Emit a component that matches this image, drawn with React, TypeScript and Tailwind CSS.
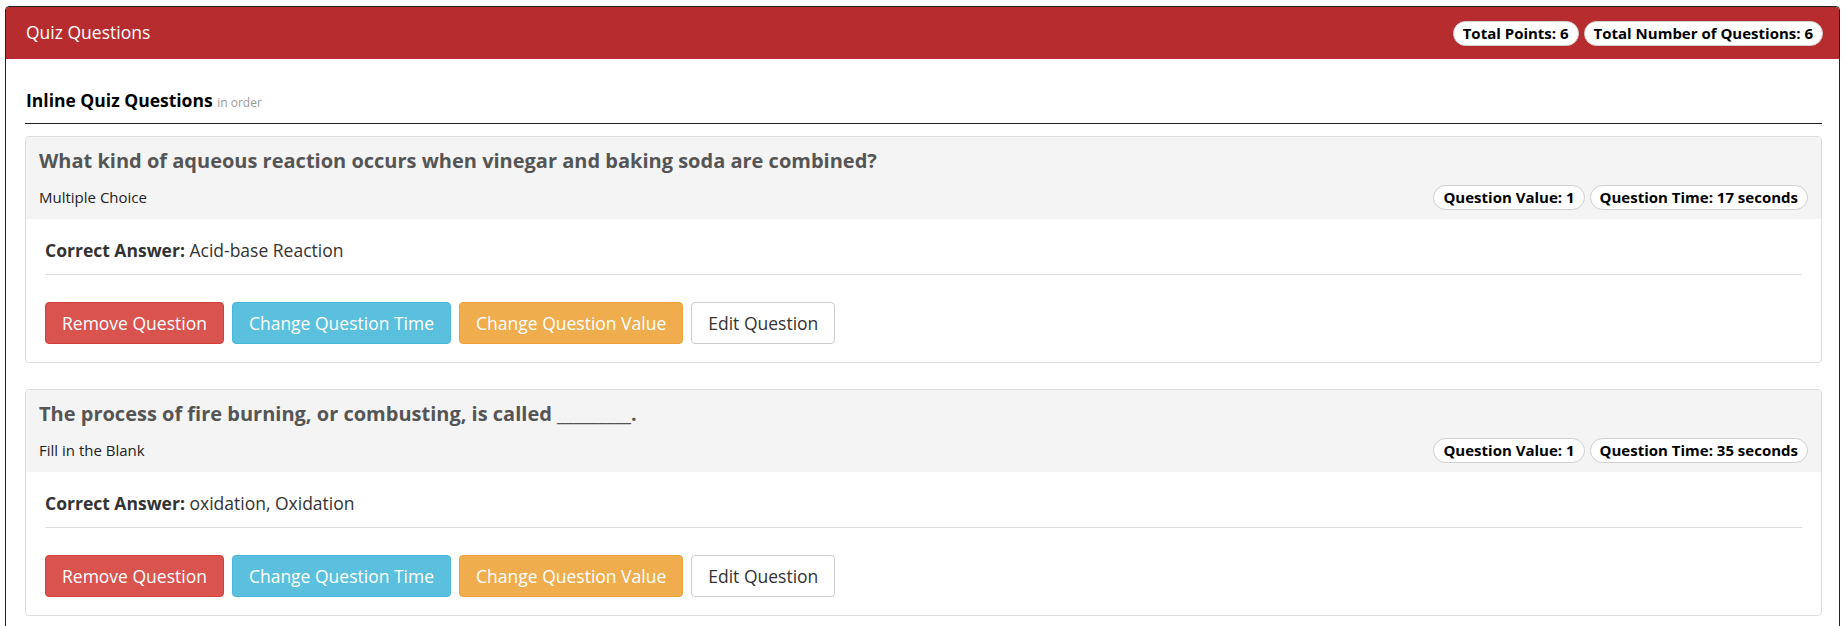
import React from "react";

/* ------------------------------------------------------------------ */
/*  Types                                                              */
/* ------------------------------------------------------------------ */

interface QuizQuestion {
  title: string;
  kind: string;
  value: number;
  seconds: number;
  answer: string;
}

const QUESTIONS: QuizQuestion[] = [
  {
    title:
      "What kind of aqueous reaction occurs when vinegar and baking soda are combined?",
    kind: "Multiple Choice",
    value: 1,
    seconds: 17,
    answer: "Acid-base Reaction",
  },
  {
    title: "The process of fire burning, or combusting, is called _________.",
    kind: "Fill in the Blank",
    value: 1,
    seconds: 35,
    answer: "oxidation, Oxidation",
  },
];

/* ------------------------------------------------------------------ */
/*  Sub-components                                                     */
/* ------------------------------------------------------------------ */

function Pill({ children }: { children: React.ReactNode }) {
  return (
    <span className="inline-flex h-[25px] items-center rounded-full border border-[#cfcfcf] bg-white px-[9px] text-[15px] font-bold leading-none text-black">
      {children}
    </span>
  );
}

const BTN =
  "rounded-[4px] border px-4 py-[8px] text-[17.5px] leading-[24px] whitespace-nowrap";

function QuestionCard({ q }: { q: QuizQuestion }) {
  return (
    <div className="overflow-hidden rounded-[4px] border border-[#dddddd] bg-white">
      <div className="bg-[#f4f4f4] px-[13px] pt-[10px] pb-[9px]">
        <h4 className="text-[20px] font-bold leading-[27px] text-[#555555]">
          {q.title}
        </h4>
        <div className="mt-[11px] flex h-[25px] items-center justify-between">
          <span className="text-[15px] text-[#222222]">{q.kind}</span>
          <div className="flex gap-[5px]">
            <Pill>Question Value: {q.value}</Pill>
            <Pill>Question Time: {q.seconds} seconds</Pill>
          </div>
        </div>
      </div>
      <div className="px-[19px] pt-[19px] pb-[18px]">
        <p className="border-b border-[#dddddd] pb-[12px] text-[17.5px] leading-[24px] text-[#333333]">
          <span className="font-bold">Correct Answer:</span> {q.answer}
        </p>
        <div className="mt-[27px] flex gap-2">
          <button className={`${BTN} border-[#d43f3a] bg-[#d9534f] text-white`}>
            Remove Question
          </button>
          <button className={`${BTN} border-[#46b8da] bg-[#5bc0de] text-white`}>
            Change Question Time
          </button>
          <button className={`${BTN} border-[#eea236] bg-[#f0ad4e] text-white`}>
            Change Question Value
          </button>
          <button className={`${BTN} border-[#cccccc] bg-white text-[#333333]`}>
            Edit Question
          </button>
        </div>
      </div>
    </div>
  );
}

/* ------------------------------------------------------------------ */
/*  Component                                                          */
/* ------------------------------------------------------------------ */

export default function App() {
  const totalPoints = QUESTIONS.reduce((s, q) => s + q.value, 0) + 4;

  return (
    <div className="min-h-screen bg-white px-[5px] pt-[6px] font-['Open_Sans',sans-serif]">
      <div className="overflow-hidden rounded-[4px] border border-[#222222]">
        <div className="flex h-[52px] items-center justify-between bg-[#b72c2f] pr-[16px] pl-[20px]">
          <h3 className="text-[17.5px] leading-none text-white">Quiz Questions</h3>
          <div className="flex gap-[5px]">
            <Pill>Total Points: {totalPoints}</Pill>
            <Pill>Total Number of Questions: 6</Pill>
          </div>
        </div>

        <div className="pt-[29px] pr-[17px] pb-[24px] pl-[19px]">
          <div className="border-b border-[#222222] pb-[8px] pl-px text-[17.5px] leading-[24px]">
            <span className="font-bold text-black">Inline Quiz Questions</span>{" "}
            <span className="text-[12px] text-[#999999]">in order</span>
          </div>

          <div className="mt-[12px] flex flex-col gap-[26px]">
            {QUESTIONS.map((q, i) => (
              <QuestionCard key={i} q={q} />
            ))}
          </div>
        </div>
      </div>
    </div>
  );
}
